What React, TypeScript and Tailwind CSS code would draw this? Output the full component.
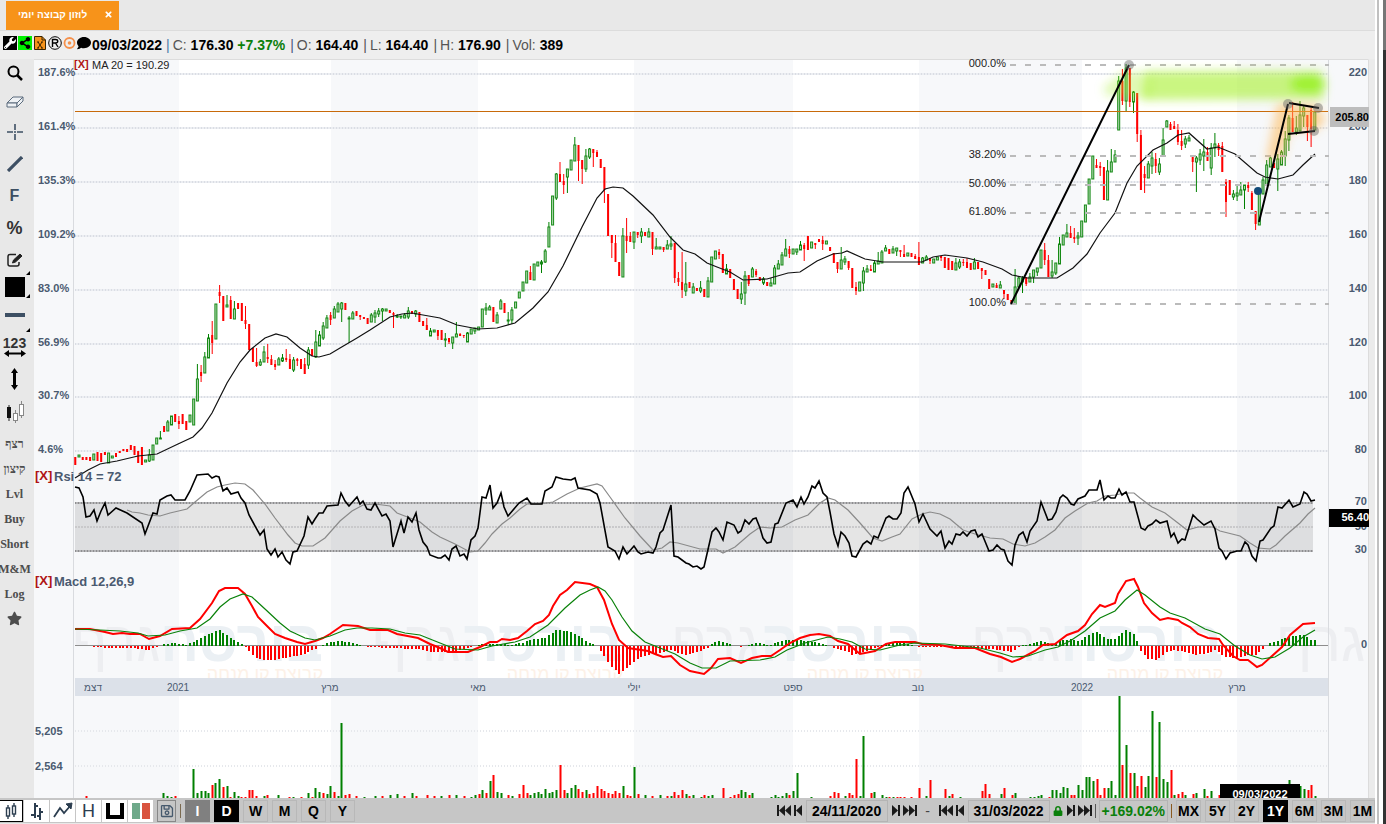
import { useState } from "react";
import {
  FaComment,
  FaLock,
  FaRegEdit,
  FaRegSave,
  FaSearch,
  FaShareAlt,
  FaStar,
  FaTimes,
  FaWrench,
} from "react-icons/fa";

const STEP = 3.7;
const FIRST_X = 75.3;
const SANS = "'Liberation Sans', Arial, sans-serif";

// one token per day: colour, then top.bottom or high.top.bottom.low
const CANDLES = `
r457.465 g455.457 r457.460 r457.460 r457.461 g454.460 r452.461 r453.462 r452.455 g453.463
g456.458 r453.457 r451.453 r449.451 r449.452 r445.450 r446.455 r451.463 r447.465 g460.462
g449.455.461.462 g445.460 g438.444 g431.438.439.439 r426.432 g420.422.431.431 g416.425 r414.422 r416.421.424.429 r414.424
r421.430 g415.422 g399.425 g364.379.401.401 r365.372.376.382 g352.357.373.373 g334.338.358.358 r321.335.343.354 g304.339 r285.292.296.303
r296.321 g295.305.307.307 r296.300.319.319 g301.309.319.319 r303.309 r303.321 r306.320.324.329 r324.350 r348.362 r348.362.366.367
g359.362.365.366 g346.352.362.362 r344.357.359.363 r355.359.365.365 r360.364.367.370 g357.359.365.365 g354.358.361.362 r349.358.360.362 r354.359.369.369 g357.360.370.372
r358.359.361.366 r359.369 r358.364.374.374 g347.350.365.369 r349.356 g330.342.357.358 g331.335.346.346 g322.326.338.340 g315.318.328.328 r312.315.320.325
g306.309.318.318 g302.304.312.312 g302.303.309.322 r303.310 g316.318.319.343 g311.313.319.319 r311.316 r315.315.317.320 r317.319 r318.324
g313.315.322.322 g310.313.317.323 g308.311.314.317 g308.309.311.321 g309.311 r310.313 r312.313.315.328 g314.316.317.318 g316.316.317.319 g313.315.318.318
g307.311.317.319 r311.314 g310.311.314.317 r312.322 r321.326 r318.325.330.330 g328.331.336.336 g330.332 r330.330.336.340 r330.340
g333.339.340.347 r338.338.342.344 g337.337.343.349 g322.334.337.337 r333.334.336.336 r335.335.336.338 g332.333.342.342 g329.334 g328.328.331.334 g327.330
g309.327 g303.308.310.315 g305.307.310.310 r307.322 g312.315.323.323 g299.301.309.309 r303.313 g312.320.321.325 g307.310.320.324 g302.308
g292.298 g282.291 g271.283 r266.272.280.280 g264.280 g262.266 g260.262.264.273 g249.251.262.263 g222.227.247.247 g196.225
g173.174.198.200 r162.174.182.182 r174.181.185.194 g169.169.177.193 g160.170 g137.145.161.161 r145.145.161.181 r160.160.169.184 g149.156.169.172 g148.149.157.159
r149.149.153.167 r150.152.157.157 r159.168 r167.167.190.203 r194.236 r235.235.243.258 r235.243.262.262 r262.276 g228.236.277.277 r218.236.241.253
r232.236.242.242 g232.232.242.249 r232.232.235.238 g228.232.236.243 r232.236 g228.232.237.237 r232.232.249.255 g238.247.249.249 g247.249 r247.247.250.252
g240.245.249.249 g236.244.246.250 r243.243.278.283 r272.278.282.286 r252.282.290.298 g262.284.291.296 r282.288 g283.287.293.293 r288.291 g281.288.291.293
r289.297 g277.281.297.297 g257.282 g251.259 r249.252.255.259 r254.273 g264.269.274.274 r269.278 r279.290 r289.299
g282.294.299.304 g271.276.293.305 r275.275.284.286 g267.269.277.277 r269.271.275.277 r277.281 g277.279.283.285 r282.286 g278.283.286.286 g265.268.284.284
g260.264.269.269 g252.255.265.265 g239.249.256.256 r246.249.254.258 g249.254 g249.249.252.255 g241.245.250.250 r243.245.249.261 r236.250 g242.248
r243.243.245.249 r239.242 r236.240.244.250 g241.244 r247.251 r253.263 r262.262.269.273 g247.260.269.269 g256.259.262.265 r261.261.268.270
r268.288 r282.287.291.295 g282.291 g267.271.283.291 g265.269.272.272 r265.269.271.271 g261.263.272.272 g252.261.264.264 g250.252.263.263 g245.248.251.251
r249.254 g246.249.253.253 g248.248.251.256 r250.250.252.257 r245.254.257.257 g253.256 r253.257 r254.256.259.259 r242.257.265.265 g257.258.263.263
g255.257.260.260 r258.258.261.264 g259.263 g257.260 r256.256.258.261 r257.268 r258.270 r261.270 g258.263.270.270 g259.262.267.269
r259.262.263.266 r258.262.268.268 r263.270 g258.262.269.269 r262.269 r268.268.271.279 r270.275 r279.289 g284.287 r283.285.288.288
g281.285.288.288 r290.290.294.299 r294.300 r300.305 g269.287.304.304 g276.278.287.287 g276.278.282.293 r277.277.284.286 g273.277.282.282 g270.270.277.283
g268.268.272.276 g250.268 r243.250.260.265 r255.260.277.277 g260.272.276.278 g263.263.273.275 g237.244.264.264 g235.245 g224.233.237.237 r226.233.238.238
r228.237.239.243 g232.236.238.245 g221.237 g205.222 g179.204 g156.179 r159.165.168.168 r162.166.168.176 r167.200 g160.171.200.200
g149.162.172.172 g150.155.162.162 g76.81.130.130 r69.81.101.105 g64.68.101.111 r68.68.102.107 g91.92.102.113 r93.93.134.142 r130.135.190.190 r166.174.178.193
g161.164.178.178 g152.158.166.174 r153.159.166.173 g158.164.172.175 g128.140.156.156 g120.121.127.127 r122.124.130.130 r121.126.129.129 r124.130.142.145 r130.141.146.150
g136.139.144.148 g135.138.141.141 r155.155.162.172 g156.158.162.192 g149.154.160.165 g139.152.156.171 r147.152.161.161 g143.148.168.175 g133.144.148.157 r143.145.150.156
r142.146.172.172 r179.182.202.217 r180.195 g190.194.197.200 g184.193.196.201 g182.190.195.195 g185.185.190.209 r182.185.188.192 r191.193.210.210 r211.211.224.230
g191.193.225.225 g177.180.194.194 g160.165.185.185 g155.158.167.167 r163.168 g154.159.169.191 g150.152.165.165 g131.139.156.166 g115.118.140.151 r102.118.132.132
g116.128.132.135 g101.115.131.131 g106.108.116.127 r115.115.127.141 r108.110.129.147 g112.130
`
  .trim()
  .split(/\s+/)
  .map((token, i) => {
    const n = token.slice(1).split(".").map(Number);
    const [high, top, bottom, low] = n.length === 2 ? [n[0], n[0], n[1], n[1]] : n;
    return { x: FIRST_X + i * STEP, up: token[0] === "g", high, top, bottom, low };
  });

const MA20 =
  "75,478 88,470 100,464 117,461 138,456 157,454 178,444 193,437 202,428 212,413 227,383 240,362 250,350 265,338 276,334 287,337 300,348 312,356 319,357 330,354 340,348 357,338 370,330 390,317 402,314 412,313 423,315 440,318 457,325 478,329 497,328 515,323 533,308 548,292 563,266 582,227 597,198 605,189 613,187 623,188 633,196 653,215 670,237 683,250 695,254 707,263 717,267 730,272 743,280 767,279 788,273 800,272 817,261 833,254 842,253 847,251 865,259 883,262 897,262 922,262 933,257 945,255 967,258 983,262 1002,269 1012,275 1027,278 1057,278 1073,268 1087,254 1100,233 1115,213 1127,183 1137,166 1153,150 1167,143 1178,135 1189,133 1207,149 1218,147 1235,154 1257,173 1265,177 1278,179 1293,175 1303,165 1315,154";

const RSI =
  "75,487 79,488 83,497 86,517 90,516 94,510 97,521 101,511 105,503 108,515 116,508 127,513 142,523 145,534 153,513 157,514 160,500 167,496 171,495 175,500 185,500 190,491 197,475 208,474 212,478 216,476 219,477 223,491 227,488 231,494 238,492 241,498 245,503 249,515 260,535 264,530 267,549 271,555 275,549 278,557 282,552 286,560 290,564 293,552 297,551 304,536 308,517 312,524 315,519 319,513 323,513 327,506 338,505 341,493 345,501 349,506 357,497 360,504 363,501 367,509 371,510 375,503 382,516 386,514 390,521 393,547 401,521 404,533 408,517 412,522 416,513 419,530 423,542 427,547 430,555 438,558 441,558 445,555 449,560 452,549 456,546 460,556 464,554 467,559 471,540 475,536 478,528 482,497 486,498 490,485 493,508 497,503 501,493 504,507 508,516 519,503 527,498 531,504 542,504 545,491 552,487 556,477 563,479 571,480 575,478 578,488 590,490 597,494 600,503 608,547 615,551 619,559 623,547 627,554 634,546 638,552 641,554 648,552 653,553 656,547 660,533 663,530 671,505 674,556 678,557 686,563 689,564 693,567 697,566 701,569 704,567 712,532 716,528 719,532 723,540 727,522 734,525 738,533 741,531 745,520 749,524 753,519 756,518 760,528 763,538 767,543 771,542 775,524 778,523 786,503 793,500 797,507 801,497 804,504 808,497 812,486 815,488 819,481 823,493 827,497 830,512 834,534 838,546 841,532 845,536 849,543 852,556 856,557 863,544 867,541 871,544 874,536 878,538 886,518 889,516 893,519 897,519 901,513 904,493 908,487 915,504 919,522 923,514 930,529 937,536 941,531 945,548 949,541 952,544 956,534 960,535 963,532 967,536 971,531 975,530 978,537 982,534 989,551 993,550 997,545 1001,549 1004,550 1008,561 1012,565 1015,545 1019,535 1023,532 1027,542 1030,531 1037,521 1041,502 1048,520 1052,519 1056,512 1060,498 1063,495 1067,498 1071,504 1074,505 1078,499 1085,496 1089,490 1097,490 1100,480 1104,500 1108,496 1111,498 1115,498 1119,489 1122,495 1126,492 1130,502 1134,502 1141,528 1145,530 1148,526 1152,524 1156,520 1160,523 1167,521 1171,537 1174,533 1178,543 1182,539 1185,540 1193,515 1197,519 1204,525 1211,521 1215,529 1219,548 1222,551 1226,559 1230,553 1237,551 1241,551 1245,542 1248,545 1252,556 1256,561 1260,541 1263,540 1271,528 1274,526 1278,507 1282,508 1289,500 1293,507 1300,504 1304,492 1307,494 1311,501 1315,500";

const RSI_SIGNAL =
  "127,510 132,512 140,513 148,515 160,516 170,513 187,509 195,502 207,492 217,487 225,485 235,483 245,484 253,490 265,504 275,518 288,535 295,543 302,546 313,546 325,538 340,521 352,511 363,505 375,504 390,506 397,513 410,518 420,522 432,532 440,537 455,544 470,552 478,551 485,543 492,534 502,524 510,518 520,509 527,504 540,504 553,502 567,494 580,488 597,484 602,486 610,497 625,518 640,536 653,550 662,548 670,542 678,543 700,549 716,549 723,553 735,547 750,534 760,527 770,528 782,527 795,520 808,515 820,503 828,498 835,500 848,510 860,523 873,538 882,541 892,537 900,534 912,519 922,514 930,512 940,514 950,519 963,530 975,534 990,538 1003,539 1013,544 1025,546 1035,543 1045,537 1055,530 1065,518 1075,511 1088,503 1097,501 1105,496 1115,495 1125,493 1134,493 1140,498 1152,507 1165,513 1178,523 1187,530 1198,527 1213,527 1220,531 1240,536 1250,543 1258,548 1270,549 1276,545 1285,536 1300,523 1308,514 1315,508";

const MACD =
  "75,629 90,629 105,632 113,634 122,633 130,634 140,634 149,639 160,636 172,629 190,628 200,619 212,603 219,591 225,588 238,588 245,594 252,606 258,617 268,627 275,634 285,638 297,642 305,644 315,641 323,638 330,634 343,625 358,626 370,630 388,630 397,634 418,638 430,644 440,648 448,652 468,652 480,647 490,642 497,642 502,639 510,640 518,638 527,631 535,624 543,621 549,615 553,606 560,595 567,590 575,582 590,584 597,587 604,600 612,624 619,640 628,648 648,651 655,654 663,657 671,656 680,665 690,671 704,674 711,668 718,659 730,658 741,663 752,658 762,656 771,656 780,650 790,643 800,638 810,635 819,634 830,636 838,641 848,644 860,654 875,651 886,644 895,642 915,642 922,644 940,645 955,648 975,648 990,654 1001,657 1012,662 1020,659 1035,651 1043,645 1055,644 1067,635 1078,631 1085,625 1092,614 1100,605 1105,607 1115,603 1118,594 1126,581 1134,579 1138,587 1144,603 1152,613 1160,620 1168,618 1178,620 1182,623 1190,627 1198,634 1208,638 1219,639 1223,645 1233,656 1240,660 1248,660 1257,667 1262,665 1272,656 1282,647 1290,635 1303,624 1315,623";

const MACD_SIGNAL =
  "75,629 100,630 120,631 138,633 148,636 165,635 180,631 197,628 210,619 220,607 230,599 243,594 252,597 265,609 280,623 290,631 305,638 315,640 330,636 345,630 357,628 372,628 390,629 405,633 420,635 440,643 455,649 478,650 492,646 515,642 530,637 548,625 565,608 580,595 590,590 598,587 605,591 612,600 622,617 632,631 645,642 660,648 675,654 690,663 702,668 716,668 730,661 760,660 775,657 787,650 805,643 828,637 840,639 852,642 865,649 880,650 900,645 915,643 945,644 980,648 1000,653 1013,657 1028,656 1045,650 1058,647 1070,641 1085,631 1100,618 1115,611 1125,600 1137,590 1145,595 1160,607 1170,613 1185,618 1205,629 1220,634 1235,646 1250,655 1262,659 1275,657 1290,648 1303,637 1315,630";

// macd minus signal, sampled where the slope changes
const HISTOGRAM_KNOTS = [
  [75, 0], [90, 0], [105, -2], [130, -2], [148, -4], [160, 0], [165, 2], [175, 3], [187, 1],
  [195, 5], [205, 10], [219, 16], [228, 10], [240, 3], [245, 0], [248, -4], [256, -12], [262, -14],
  [275, -14], [295, -10], [305, -8], [315, -3], [320, 0], [330, 4], [340, 5], [350, 4], [362, 0],
  [370, -1], [390, -2], [418, -3], [430, -6], [450, -6], [465, -3], [473, 0], [482, 2], [500, 2],
  [510, 1], [522, 3], [532, 7], [545, 8], [557, 16], [570, 15], [580, 9], [590, 3], [597, 0],
  [603, -8], [611, -20], [619, -28], [627, -22], [640, -11], [655, -8], [663, -6], [671, -4],
  [685, -9], [700, -5], [708, -2], [712, 2], [718, 5], [728, 3], [735, 0], [741, -1], [748, 1],
  [758, 3], [770, 1], [785, 6], [800, 6], [815, 4], [830, 0], [837, -3], [847, -5], [853, -9],
  [861, -7], [875, -2], [880, 0], [886, 2], [900, 4], [913, 1], [920, -1], [945, -1], [960, -3],
  [990, -3], [1012, -6], [1020, 0], [1030, 2], [1042, 5], [1053, 2], [1060, 5], [1070, 7],
  [1080, 5], [1087, 10], [1096, 14], [1108, 7], [1115, 7], [1126, 16], [1134, 12], [1138, 3],
  [1141, -5], [1148, -13], [1157, -14], [1165, -7], [1175, -4], [1185, -6], [1195, -9],
  [1205, -8], [1216, -4], [1225, -11], [1236, -12], [1248, -9], [1256, -9], [1263, -3],
  [1270, 3], [1280, 6], [1290, 10], [1305, 11], [1312, 5], [1316, 6],
];

const histogramAt = (x: number) => {
  const k = HISTOGRAM_KNOTS.findIndex((knot) => knot[0] >= x);
  if (k <= 0) return 0;
  const [x0, y0] = HISTOGRAM_KNOTS[k - 1];
  const [x1, y1] = HISTOGRAM_KNOTS[k];
  return y0 + ((x - x0) / (x1 - x0)) * (y1 - y0);
};

// x, colour and height of each volume bar
const VOLUME = `
86r2 163g5 167g2 171g1 175r2 193g29 197g5 201g7 205g7 208g5 212r13 215g15 219g19 223r11 227g12 230r1 234g6 238g2
241r1 245r1 249r8 252r8 256r2 264g2 267r3 278g3 289r1 293g1 301r1 308g5 312r1 315g10 319g6 323r5 327g4 330g12 334r6
338g2 341g75 345r3 349r4 356r2 364g1 375g2 382r2 390g3 397g4 404r2 412g5 416r2 427r3 434r2 441g2 449r3 456g3 464r2
471g1 475g3 479r4 482g8 486r5 490g17 493r23 497g6 501g5 508r3 512g2 519r4 523r13 527r5 530g3 534g5 538g6 541g4 545g9
549g5 552g6 556g8 560r33 564r8 567g5 571g10 575g13 578r9 582r6 586g8 589r4 593r5 597r12 601r9 604r7 608r5 612r4 615r7
619r5 623g12 627r3 630r2 634g31 638r4 645g3 652r2 660g3 667r2 671g2 674r6 678r3 682r8 686g4 689r2 693g3
701g1 704r3 708g2 712g3 723r10 730r1 734r3 738r4 741g8 745g6 749r3 752g5 771g1 775g3 778g1 782g2 786g5 789r3 793g7
797g25 811g1 830r2 834r6 838r5 845g2 849r5 852r3 856r39 860g2 863g62 871r5 874g6 882g3 886g1 889r1 893g1 897r1 900r1
904r1 911r1 919r10 926g2 930r18 945r9 949g2 952r4 960g1 982r7 985r14 989r4 1001g4 1004r10 1012r3 1015g5 1030g1 1034g1
1038g2 1041g3 1049r1 1052g8 1056g8 1060g5 1063g11 1067g10 1071r3 1074r3 1078g13 1082g8 1086g21 1089g21 1093g17 1097r19
1100r3 1104r10 1108g10 1111g17 1115g3 1119g102 1122r33 1126g53 1130r25 1134g25 1137r12 1141r22 1145g11 1148g22 1152g87
1156r21 1159g76 1163g19 1167g16 1171r28 1174g3 1178r4 1182r6 1185g3 1193r4 1196g5 1204g9 1207r2 1211g7 1219r3 1289g18
1300g12 1304g9 1308r8 1311r13 1315g2
`
  .trim()
  .split(/\s+/)
  .map((token) => {
    const [x, h] = token.split(/[rg]/).map(Number);
    return { x, h, up: token.includes("g") };
  });

const LEVELS = [
  { y: 74, percent: "187.6%", price: "220" },
  { y: 128, percent: "161.4%", price: "200" },
  { y: 182, percent: "135.3%", price: "180" },
  { y: 236, percent: "109.2%", price: "160" },
  { y: 290, percent: "83.0%", price: "140" },
  { y: 344, percent: "56.9%", price: "120" },
  { y: 397, percent: "30.7%", price: "100" },
  { y: 451, percent: "4.6%", price: "80" },
];

const FIBONACCI = [
  { y: 65, label: "000.0%" },
  { y: 156, label: "38.20%" },
  { y: 185, label: "50.00%" },
  { y: 213, label: "61.80%" },
  { y: 304, label: "100.0%" },
];

const MONTHS = [
  { x: 93, label: "דצמ" },
  { x: 178, label: "2021" },
  { x: 330, label: "מרץ" },
  { x: 478, label: "מאי" },
  { x: 634, label: "יולי" },
  { x: 793, label: "ספט" },
  { x: 918, label: "נוב" },
  { x: 1082, label: "2022" },
  { x: 1237, label: "מרץ" },
];

const WHITE_BANDS = [
  [179, 152],
  [478, 156],
  [793, 126],
  [1082, 155],
];

const Chart = () => (
  <svg
    viewBox="34 59 1335 739"
    className="block w-full"
    fontFamily={SANS}
    fontSize={11}
    role="img"
    aria-label="Price, RSI, MACD and volume"
  >
    <defs>
      <filter id="spray" x="-20%" y="-40%" width="140%" height="180%">
        <feGaussianBlur stdDeviation="5" />
      </filter>
    </defs>
    <rect x="34" y="59" width="1335" height="739" fill="#f7f8fa" />
    {WHITE_BANDS.map(([x, width]) => (
      <rect key={x} x={x} y="59" width={width} height="739" fill="#fff" />
    ))}

    {/* watermark */}
    {[323, 623, 923, 1223].map((x) => (
      <g key={x} fontWeight="bold" direction="rtl">
        <text x={x} y="661" fontSize="57">
          <tspan fill="#ebf0f4">בורסה</tspan>
          <tspan fill="#edeef1" fontWeight="normal">גרף</tspan>
        </text>
        <text x={x} y="680" fontSize="18" fontWeight="normal" fill="#fdf1e7">
          קבוצת קו מנחה
        </text>
      </g>
    ))}
    <text x="1365" y="661" fontSize="57" direction="rtl" fill="#edeef1">
      גרף
    </text>

    {/* grid */}
    {LEVELS.map(({ y }) => (
      <g key={y}>
        <path d={`M75 ${y}H1328`} stroke="#eceef2" strokeWidth="2" />
        <path d={`M75 ${y}H1328`} stroke="#dadde4" strokeWidth="2" strokeDasharray="1 2" />
      </g>
    ))}
    {[731, 766].map((y) => (
      <path key={y} d={`M75 ${y}H1328`} stroke="#e6e8ec" strokeWidth="2" strokeDasharray="1 2" />
    ))}
    <path d="M73.5 59V798M1328.5 59V798" stroke="#d9dbdf" strokeWidth="1" />
    <path d="M34 59.5H1368.5V798" fill="none" stroke="#dcdcdc" />

    {/* rsi band */}
    <rect x="75" y="502" width="1238" height="49" fill="#000" fillOpacity="0.1" />
    <path d="M75 527H1313" stroke="#c9c9cb" strokeWidth="2" strokeDasharray="2 1" />
    <path d="M75 503H1313M75 551H1313" stroke="#b5b5b7" strokeWidth="2" />
    <path d="M75 503H1313M75 551H1313" stroke="#8e8e90" strokeWidth="2" strokeDasharray="1 2" />

    {/* time axis */}
    <rect x="75" y="678" width="1253" height="18" fill="#dce1e9" />
    {MONTHS.map(({ x, label }) => (
      <text key={x} x={x} y="691" textAnchor="middle" fontSize="10" fill="#4a5a70">
        {label}
      </text>
    ))}

    {/* volume */}
    {VOLUME.map(({ x, h, up }) => (
      <g key={x} fill={up ? "#008000" : "#ff0000"}>
        <rect x={x - 1} y={798 - h} width="3" height={h} fillOpacity="0.5" />
        <rect x={x} y={798 - h} width="1" height={h} />
      </g>
    ))}

    {/* candles */}
    {CANDLES.map(({ x, up, high, top, bottom, low }) =>
      up ? (
        <g key={x} stroke="#008000">
          <path d={`M${x} ${high}V${top}M${x} ${bottom}V${low}`} />
          <rect
            x={x - 1}
            y={top}
            width="2"
            height={Math.max(bottom - top, 1)}
            fill="#b5dab5"
            strokeOpacity="0.9"
          />
        </g>
      ) : (
        <g key={x} fill="#ff0000">
          <rect x={x - 0.5} y={high} width="1" height={low - high} />
          <rect x={x - 1} y={top} width="2" height={Math.max(bottom - top, 1)} />
        </g>
      )
    )}
    <polyline points={MA20} fill="none" stroke="#111" strokeWidth="1.2" />
    <path d="M75 111.5H1328" stroke="#c86a0a" />

    {/* fibonacci levels */}
    {FIBONACCI.map(({ y, label }) => (
      <g key={y}>
        <path d={`M1010 ${y}H1329`} stroke="#bbb" strokeWidth="2" strokeDasharray="6 9" />
        <text x="1006" y={y + 2} textAnchor="end" fill="#222">
          {label}
        </text>
      </g>
    ))}

    {/* rsi and macd */}
    <polyline points={RSI_SIGNAL} fill="none" stroke="#8a8a8a" strokeWidth="1.2" />
    <polyline points={RSI} fill="none" stroke="#000" strokeWidth="1.6" />
    <path d="M75 645.5H1328" stroke="#8d8d8d" />
    {CANDLES.map(({ x }) => {
      const h = Math.round(histogramAt(x));
      return (
        <rect
          key={x}
          x={Math.round(x) - 1}
          y={h > 0 ? 646 - h : 646}
          width="2"
          height={Math.abs(h)}
          fill={h > 0 ? "#008000" : "#ff0000"}
        />
      );
    })}
    <polyline points={MACD} fill="none" stroke="#ff0000" strokeWidth="2" />
    <polyline points={MACD_SIGNAL} fill="none" stroke="#0a820a" strokeWidth="1.2" />

    {/* highlighter strokes */}
    <g filter="url(#spray)" fill="#a6f02c">
      <path d="M1146 71L1322 71L1324 99L1142 100Z" fillOpacity="0.6" />
      <path d="M1103 88L1124 72L1150 72V99L1106 95Z" fillOpacity="0.35" />
      <ellipse cx="1308" cy="84" rx="18" ry="9" fill="#84f000" fillOpacity="0.6" />
    </g>
    <g filter="url(#spray)" fill="#ffb347">
      <path d="M1277 104H1318V131H1290L1282 160H1266Z" fillOpacity="0.5" />
      <ellipse cx="1319" cy="119" rx="7" ry="7" fillOpacity="0.4" />
    </g>

    {/* trend lines */}
    <path
      d="M1011 304L1129 65M1259 222L1288 104M1289 103L1319 108M1288 134L1315 131"
      stroke="#000"
      strokeWidth="2"
    />
    {[[1129, 65], [1288, 104], [1318, 108], [1314, 131]].map(([cx, cy]) => (
      <circle key={cx} cx={cx} cy={cy} r="5" fill="#666" fillOpacity="0.45" />
    ))}
    <circle cx="1258" cy="191" r="4" fill="#124a78" />

    {/* scales */}
    <g fontWeight="bold" fill="#4a5a70">
      {LEVELS.map(({ y, percent, price }) => (
        <g key={y}>
          <text x="38" y={y + 2}>
            {percent}
          </text>
          <text x="1367" y={y + 2} textAnchor="end">
            {price}
          </text>
        </g>
      ))}
      <text x="35" y="735">5,205</text>
      <text x="35" y="770">2,564</text>
      <g textAnchor="end">
        <text x="1367" y="505">70</text>
        <text x="1367" y="530">50</text>
        <text x="1367" y="553">30</text>
        <text x="1367" y="648">0</text>
      </g>
      <text x="54" y="481" fontSize="13">Rsi 14 = 72</text>
      <text x="54" y="586" fontSize="13">Macd 12,26,9</text>
    </g>
    <g fontWeight="bold" fill="#b01414">
      <text x="74" y="68" fontSize="11">[X]</text>
      <text x="35" y="480" fontSize="13">[X]</text>
      <text x="35" y="585" fontSize="13">[X]</text>
    </g>
    <text x="92" y="69" fill="#222">MA 20 = 190.29</text>

    {/* value tags */}
    <g fontWeight="bold">
      <rect x="1330" y="107" width="39" height="20" fill="#bdbdbd" />
      <text x="1369" y="121" textAnchor="end">205.80</text>
      <rect x="1329" y="509" width="40" height="18" fill="#000" />
      <text x="1369" y="521" textAnchor="end" fill="#fff">56.40</text>
      <rect x="1220" y="784" width="80" height="14" fill="#000" />
      <text x="1260" y="798" textAnchor="middle" fill="#fff">09/03/2022</text>
    </g>
  </svg>
);

const TOOL = "flex w-full cursor-pointer items-center justify-center";

const SideTools = () => (
  <nav className="flex w-[34px] shrink-0 flex-col items-center overflow-hidden pr-[5px] text-[#3d4f63]">
    <button className={`${TOOL} h-7 text-black`} aria-label="Zoom">
      <svg width="16" height="16" fill="none" stroke="#000">
        <circle cx="6.500" cy="6.500" r="5" strokeWidth="2" />
        <path d="M10 10L15 15" strokeWidth="2.500" />
      </svg>
    </button>
    <button className={`${TOOL} h-[29px]`} aria-label="Erase">
      <svg width="18" height="12" viewBox="0 0 18 12" fill="#eef1f4" stroke="#5b6b7c">
        <path d="M1 7L7 1H17L11 7Z" />
        <path d="M1 7H11V11H1Z" />
        <path d="M11 7L17 1V5L11 11Z" />
      </svg>
    </button>
    <button className={`${TOOL} h-8`} aria-label="Crosshair">
      <svg width="16" height="16" stroke="currentColor" strokeWidth="1.600">
        <path d="M0 8H6M10 8H16M8 0V6M8 10V16M7 8H9" />
      </svg>
    </button>
    <button className={`${TOOL} h-8`} aria-label="Line">
      <svg width="16" height="16" stroke="currentColor" strokeWidth="3.200">
        <path d="M1 15L15 1" />
      </svg>
    </button>
    <button className={`${TOOL} h-8 text-base font-bold`}>F</button>
    <button className={`${TOOL} h-8 text-lg font-bold text-[#333]`}>%</button>
    <button className={`${TOOL} relative h-[31px] text-[#222]`} aria-label="Edit">
      <svg width="16" height="14" fill="none" stroke="#222">
        <path d="M9 1.500H3Q1 1.500 1 3.500V11Q1 13 3 13H10Q12 13 12 11V9" strokeWidth="1.500" />
        <path d="M5.500 10L6.500 7L13 1L15 3L8.500 9Z" fill="#222" />
      </svg>
      <Corner />
    </button>
    <button className={`${TOOL} relative h-[23px]`} aria-label="Colour">
      <span className="size-5 bg-black" />
      <Corner />
    </button>
    <button className={`${TOOL} relative h-[34px]`} aria-label="Line width">
      <span className="h-1 w-5 bg-[#3d4f63]" />
      <Corner />
    </button>
    <button className={`${TOOL} h-[30px] flex-col text-sm leading-[13px] font-bold text-[#333]`}>
      123
      <svg width="22" height="7" fill="#000">
        <path d="M0 3.5L5 0V2.5H17V0L22 3.5L17 7V4.5H5V7Z" />
      </svg>
    </button>
    <button className={`${TOOL} h-[33px]`} aria-label="Height">
      <svg width="7" height="22" fill="#000">
        <path d="M3.5 0L7 5H5V17H7L3.5 22L0 17H2V5H0Z" />
      </svg>
    </button>
    <button className={`${TOOL} h-[34px]`} aria-label="Candles">
      <svg width="18" height="22" fill="#fff" stroke="#888">
        <path d="M3 4V20" stroke="#222" />
        <rect x="1" y="6" width="4" height="11" fill="#111" stroke="none" />
        <path d="M9.500 9V22M15.500 0V17" />
        <rect x="7.500" y="12.500" width="4" height="7" />
        <rect x="13.500" y="3.500" width="4" height="11" />
      </svg>
    </button>
    <div className="mt-0.5 flex w-full flex-col items-center font-['Liberation_Serif','Times_New_Roman',serif] text-xs font-bold text-[#4d4d4d]">
      {["רצף", "קיצון", "Lvl", "Buy", "Short", "M&M", "Log"].map((label) => (
        <button key={label} className="h-[25px] cursor-pointer whitespace-nowrap">
          {label}
        </button>
      ))}
      <button className="h-[25px] cursor-pointer" aria-label="Favourite">
        <FaStar size={15} />
      </button>
    </div>
  </nav>
);

// marks a tool that opens a submenu
const Corner = () => (
  <span className="absolute -right-px bottom-0 border-b-4 border-l-4 border-b-black border-l-transparent" />
);

const TopBar = () => (
  <header className="flex h-[28px] items-center text-sm text-[#555]">
    <div className="mb-1 ml-[3px] flex items-center gap-px text-black">
      <button className="flex size-[14px] items-center justify-center bg-black text-white" aria-label="Settings">
        <FaWrench size={12} />
      </button>
      <button className="flex size-[14px] items-center justify-center bg-[#00f000]" aria-label="Share">
        <FaShareAlt size={12} />
      </button>
      <button className="px-px" aria-label="Export to Excel">
        <svg width="12" height="14" fill="#f7931a" stroke="#3a2500">
          <path d="M0.500 0.500H8L11.500 4V13.500H0.500Z" />
          <path d="M8 0.500V4H11.500M4 6L8 12M8 6L4 12M3 6H5M7 6H9M3 12H5M7 12H9" fill="none" />
        </svg>
      </button>
      <button aria-label="Registered">
        <svg width="14" height="14" fill="none" stroke="#000">
          <circle cx="7" cy="7" r="6.300" />
          <path d="M4.500 11V3.500H7.500C10.500 3.500 10.500 7 7.500 7H4.500M7.500 7L10 11" strokeWidth="1.400" />
        </svg>
      </button>
      <button aria-label="Target">
        <svg width="13" height="12" fill="none" stroke="#f5904a">
          <circle cx="6.500" cy="6" r="5" strokeWidth="1.800" />
          <circle cx="6.500" cy="6" r="1.800" fill="#f5904a" stroke="none" />
        </svg>
      </button>
      <button aria-label="Comment">
        <FaComment size={14} />
      </button>
    </div>
    <p className="ml-px flex gap-[3px] whitespace-pre">
      <b className="text-black">09/03/2022</b>
      <span className="ml-px text-[#4a7da8]">|</span>
      <span>
        C: <b className="text-black">176.30</b> <b className="text-[#0b800b]">+7.37%</b>
      </span>
      <span className="ml-[2px] text-[#4a5a80]">|</span>
      <span>
        O: <b className="text-black">164.40</b>
      </span>
      <span className="ml-[2px]">|</span>
      <span>
        L: <b className="text-black">164.40</b>
      </span>
      <span className="ml-[2px]">|</span>
      <span>
        H: <b className="text-black">176.90</b>
      </span>
      <span className="ml-[2px]">|</span>
      <span>
        Vol: <b className="text-black">389</b>
      </span>
    </p>
  </header>
);

const TILE = "flex h-[22px] w-[25px] items-center justify-center bg-white text-[#2c3e50]";
const PERIOD = "h-[22px] w-[25px] cursor-pointer border text-sm leading-5 font-bold";

const Period = ({ label, active, onClick }: { label: string; active: boolean; onClick: () => void }) => (
  <button
    onClick={onClick}
    className={`${PERIOD} ${active ? "border-black bg-black text-white" : "border-[#b8b8b8] text-black"}`}
  >
    {label}
  </button>
);

const Skip = ({ double, flip, label }: { double?: boolean; flip?: boolean; label: string }) => (
  <button className="cursor-pointer" aria-label={label}>
    <svg width={double ? 14 : 9} height="11" fill="#1a1a1a" className={flip ? "rotate-180" : ""}>
      <path d="M0 0H2V11H0Z" />
      <path d="M8 0V11L2 5.500Z" />
      {double && <path d="M14 0V11L8 5.500Z" />}
    </svg>
  </button>
);

const DATE_BOX =
  "h-[22px] w-[82px] border border-[#b4b4b4] bg-transparent text-center text-sm font-bold text-black";

const BottomBar = () => {
  const [interval, setInterval] = useState("D");
  const [range, setRange] = useState("1Y");
  return (
    <footer className="-mr-[2px] flex h-[25px] items-center justify-between bg-[#c6c6c6]">
      <div className="flex items-center">
        <div className="flex gap-px">
          <button className={`${TILE} -ml-[2px] border border-black`} aria-label="Candle chart">
            <svg width="12" height="18" fill="#fff" stroke="currentColor" strokeWidth="1.400">
              <path d="M3 3V17M9 1V15" />
              <rect x="1.500" y="6" width="3" height="8" />
              <rect x="7.500" y="4" width="3" height="8" />
            </svg>
          </button>
          <button className={TILE} aria-label="Bar chart">
            <svg width="14" height="18" fill="none" stroke="currentColor" strokeWidth="2">
              <path d="M5 1V16M1 13H5M5 4H8M10 6V18M7 14H10M10 10H13" />
            </svg>
          </button>
          <button className={TILE} aria-label="Line chart">
            <svg width="20" height="17" fill="none" stroke="currentColor" strokeWidth="1.800">
              <path d="M1 15L7 6L11 11L18 3" />
              <path d="M13 2L19 1L18 7Z" fill="currentColor" strokeWidth="1" />
            </svg>
          </button>
          <button className={`${TILE} text-lg`}>H</button>
          <button className={TILE} aria-label="Renko">
            <svg width="18" height="16" fill="none" stroke="#000" strokeWidth="4">
              <path d="M0 2H4M2 0V14H16V0M14 2H18" />
            </svg>
          </button>
          <button className={`${TILE} gap-[2px]`} aria-label="Heat map">
            <span className="h-4 w-2 bg-[#6fa98a]" />
            <span className="h-4 w-2 bg-[#d9533f]" />
          </button>
        </div>
        <button
          className="ml-1 flex h-[22px] w-[19px] items-center justify-center border border-[#888] text-[#46596d]"
          aria-label="Save"
        >
          <FaRegSave size={14} />
        </button>
        <span className="mx-1 h-[14px] w-px bg-[#7a6a50]" />
        <div className="flex gap-1">
          <button className={`${PERIOD} border-[#808080] bg-[#808080] text-white`}>I</button>
          {["D", "W", "M", "Q", "Y"].map((p) => (
            <Period key={p} label={p} active={p === interval} onClick={() => setInterval(p)} />
          ))}
        </div>
      </div>
      <div className="flex items-center gap-[3px] pr-[2px]">
        <Skip double label="First start date" />
        <Skip label="Earlier start date" />
        <input className={DATE_BOX} defaultValue="24/11/2020" aria-label="From" />
        <Skip flip label="Later start date" />
        <Skip double flip label="Last start date" />
        <span className="w-4 text-center text-sm text-[#444]">-</span>
        <Skip double label="First end date" />
        <Skip label="Earlier end date" />
        <input className={DATE_BOX} defaultValue="31/03/2022" aria-label="To" />
        <FaLock size={10} className="text-[#0b800b]" />
        <Skip flip label="Later end date" />
        <Skip double flip label="Last end date" />
        <span className="h-[14px] w-px bg-[#555]" />
        <output className="h-[22px] border border-[#b4b4b4] px-[2px] text-sm leading-5 font-bold text-[#0b800b]">
          +169.02%
        </output>
        <span className="mr-px h-[14px] w-px bg-[#8a5a20]" />
        <div className="flex gap-1">
          {["MX", "5Y", "2Y", "1Y", "6M", "3M", "1M"].map((p) => (
            <Period key={p} label={p} active={p === range} onClick={() => setRange(p)} />
          ))}
        </div>
      </div>
    </footer>
  );
};

export default function App() {
  return (
    <div className="flex min-h-screen bg-[#e8e8e8] font-['Liberation_Sans',Arial,sans-serif]">
      <main className="min-w-0 flex-1">
        <div className="flex h-[31px] border-b border-[#dcdcdc] pt-px pl-[6px]">
          <div className="flex h-[29px] w-[113px] items-center justify-between bg-[#f7931a] pr-[6px] pb-[2px] pl-3 text-[10px] font-bold text-white">
            <span dir="rtl">לוזון קבוצה יומי</span>
            <button className="cursor-pointer" aria-label="Close tab">
              <FaTimes size={9} />
            </button>
          </div>
        </div>
        <div className="bg-[#eeeeee]">
          <TopBar />
        </div>
        <div className="flex">
          <SideTools />
          <div className="min-w-0 flex-1 bg-[#ebebeb] pr-[6px]">
            <Chart />
          </div>
        </div>
        <BottomBar />
      </main>
      <div className="flex w-[11px] shrink-0 bg-white pl-[2px]">
        <div className="w-[2px] bg-[#c0c0c0]" />
        <div className="ml-1 w-[3px] border-t-[50px] border-[#777] bg-[#333]" />
      </div>
    </div>
  );
}
